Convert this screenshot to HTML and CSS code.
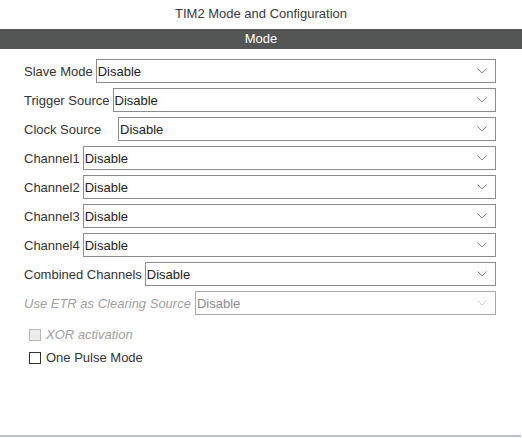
FILE: index.html
```html
<!DOCTYPE html>
<html>
<head>
<meta charset="utf-8">
<link rel="stylesheet" href="styles.css">
</head>
<body>
<div class="page">
  <div class="title">TIM2 Mode and Configuration</div>
  <div class="bar">Mode</div>
  <div class="form">
    <div class="row"><span class="label">Slave Mode</span><div class="sel"><span>Disable</span><svg width="10" height="6" viewBox="0 0 10 6"><path d="M0.5 0.5 L5 5 L9.5 0.5" fill="none" stroke="#8a8a8a" stroke-width="1"/></svg></div></div>
    <div class="row"><span class="label">Trigger Source</span><div class="sel"><span>Disable</span><svg width="10" height="6" viewBox="0 0 10 6"><path d="M0.5 0.5 L5 5 L9.5 0.5" fill="none" stroke="#8a8a8a" stroke-width="1"/></svg></div></div>
    <div class="row"><span class="label clock">Clock Source</span><div class="sel"><span>Disable</span><svg width="10" height="6" viewBox="0 0 10 6"><path d="M0.5 0.5 L5 5 L9.5 0.5" fill="none" stroke="#8a8a8a" stroke-width="1"/></svg></div></div>
    <div class="row"><span class="label">Channel1</span><div class="sel"><span>Disable</span><svg width="10" height="6" viewBox="0 0 10 6"><path d="M0.5 0.5 L5 5 L9.5 0.5" fill="none" stroke="#8a8a8a" stroke-width="1"/></svg></div></div>
    <div class="row"><span class="label">Channel2</span><div class="sel"><span>Disable</span><svg width="10" height="6" viewBox="0 0 10 6"><path d="M0.5 0.5 L5 5 L9.5 0.5" fill="none" stroke="#8a8a8a" stroke-width="1"/></svg></div></div>
    <div class="row"><span class="label">Channel3</span><div class="sel"><span>Disable</span><svg width="10" height="6" viewBox="0 0 10 6"><path d="M0.5 0.5 L5 5 L9.5 0.5" fill="none" stroke="#8a8a8a" stroke-width="1"/></svg></div></div>
    <div class="row"><span class="label">Channel4</span><div class="sel"><span>Disable</span><svg width="10" height="6" viewBox="0 0 10 6"><path d="M0.5 0.5 L5 5 L9.5 0.5" fill="none" stroke="#8a8a8a" stroke-width="1"/></svg></div></div>
    <div class="row"><span class="label">Combined Channels</span><div class="sel"><span>Disable</span><svg width="10" height="6" viewBox="0 0 10 6"><path d="M0.5 0.5 L5 5 L9.5 0.5" fill="none" stroke="#8a8a8a" stroke-width="1"/></svg></div></div>
    <div class="row disabled"><span class="label">Use ETR as Clearing Source</span><div class="sel"><span>Disable</span><svg width="10" height="6" viewBox="0 0 10 6"><path d="M0.5 0.5 L5 5 L9.5 0.5" fill="none" stroke="#cfcfcf" stroke-width="1"/></svg></div></div>
    <div class="checks">
      <div class="check disabled"><span class="box"></span><span class="ctext">XOR activation</span></div>
      <div class="check"><span class="box"></span><span class="ctext">One Pulse Mode</span></div>
    </div>
  </div>
</div>
<div class="bottom"></div>
</body>
</html>
```

FILE: styles.css
```css
html, body {
  margin: 0;
  padding: 0;
  background: #ffffff;
}
body {
  width: 522px;
  height: 438px;
  font-family: "Liberation Sans", Arial, sans-serif;
  font-size: 13px;
  color: #333333;
  display: flex;
  flex-direction: column;
  overflow: hidden;
}
.page {
  flex: 1;
}
.title {
  height: 29px;
  line-height: 28px;
  text-align: center;
  color: #3a3a3a;
}
.bar {
  height: 20px;
  line-height: 20px;
  background: #545655;
  color: #ffffff;
  text-align: center;
}
.form {
  padding: 10px 26px 0 24px;
  display: flex;
  flex-direction: column;
  gap: 5px;
}
.row {
  display: flex;
  align-items: center;
  height: 24px;
}
.label {
  white-space: nowrap;
  margin-right: 3px;
  color: #333333;
}
.label.clock {
  width: 91px;
  margin-right: 3px;
}
.sel {
  flex: 1;
  height: 24px;
  box-sizing: border-box;
  border: 1px solid #8a8c8d;
  display: flex;
  align-items: center;
  justify-content: space-between;
  padding: 0 8px 0 1px;
  color: #222222;
}
.sel svg {
  display: block;
}
.row.disabled .label {
  font-style: italic;
  color: #a0a0a0;
  margin-right: 4px;
}
.row.disabled .sel {
  border-color: #a8a8a8;
  color: #8c8c8c;
}
.checks {
  display: flex;
  flex-direction: column;
  margin-top: 3px;
  padding-left: 5px;
}
.check {
  height: 23px;
  display: flex;
  align-items: center;
}
.box {
  width: 12px;
  height: 12px;
  box-sizing: border-box;
  border: 1px solid #333333;
  background: #ffffff;
  margin-right: 5px;
}
.check.disabled .box {
  border-color: #b8b8b8;
  background: #ececec;
}
.check.disabled .ctext {
  font-style: italic;
  color: #a0a0a0;
}
.bottom {
  height: 2px;
  margin-bottom: 1px;
  width: 521px;
  background: #b6c1c7;
}
```
